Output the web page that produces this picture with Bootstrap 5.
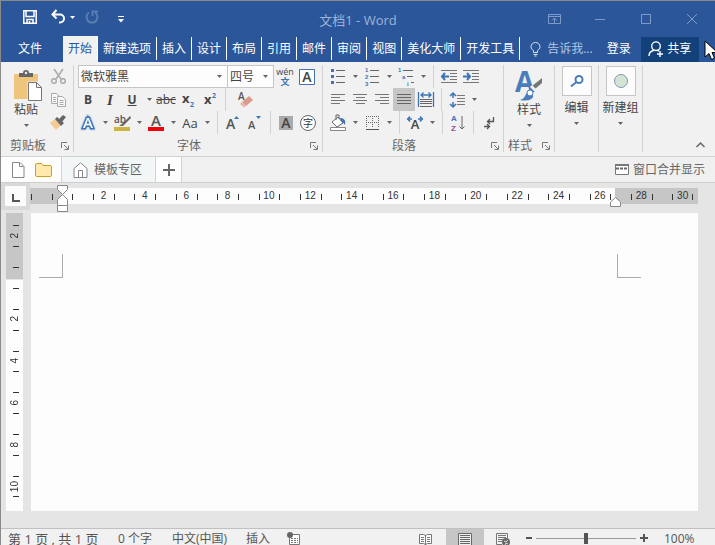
<!DOCTYPE html>
<html lang="zh-CN">
<head>
<meta charset="utf-8">
<meta name="viewport" content="width=device-width, initial-scale=1">
<title>文档1 - Word</title>
<link rel="stylesheet" href="https://cdn.jsdelivr.net/npm/bootstrap@5.3.0/dist/css/bootstrap.min.css">
<style>
:root{--blue:#2b579a;--line:#d2d2d2;--ink:#444;--dim:#666}
body{font:12px/16px "Open Sans","Noto Sans CJK SC",sans-serif;color:var(--ink);background:#e5e5e5}
button,select,input{font:inherit;color:inherit}
svg{display:block;flex:none;overflow:visible}
.plain{border:0;padding:0;background:none;display:flex;align-items:center;justify-content:center}
.app{border-top:1px solid #8a8a8a;border-left:1px solid #8a8a8a;overflow:hidden}
.titlebar{display:grid;grid-template-columns:1fr auto 1fr;height:35px;background:var(--blue);color:#9db4d6;align-items:center}
.doctitle{font-size:13px;padding-top:2px}
.quick{padding-left:22px;padding-bottom:3px}
.q-undo{margin-left:14px}.q-redo{margin-left:10px}.q-more{margin-left:19px}
.winbtn{width:46px;height:30px}
.tabs{background:var(--blue);height:26px;color:#fff}
.tabs a{color:#fff;text-decoration:none}
.tabs .file{width:62px;text-align:center;padding-right:4px}
.tabs li{height:26px;padding-top:1px}
.tabs li a{display:block;height:23px;line-height:23px;padding:0 5px;border-right:1px solid #fff}
.tabs li.on{background:#f1f1f1}
.tabs li.on a{color:var(--blue)}
.tell{color:#b3c6e2;margin-left:10px;gap:6px}
.login{margin-left:14px}
.share{background:#124078;width:58px;height:25px;margin-left:10px;color:#fff;gap:3px}
.pointer{position:absolute;left:703px;top:39px}
.ribbon{background:#f1f1f1;padding:3px 0 4px;border-bottom:1px solid var(--line)}
.grp{border-right:1px solid var(--line);height:87px}
.g-clip{width:73px}.g-font{width:249px}.g-para{width:181px}.g-style{width:51px}.g-one{width:44px}
.upper{height:69px}
.rowline{height:23px;padding-left:3px}
.g-para .rowline{padding-left:4px}
.tb{width:22px;height:23px}
.tb.on{background:#c6c6c6}
.tb.slim{width:14px}
.tb.ital{font-family:"Liberation Serif",serif;font-size:15px;font-weight:700;font-style:italic}
.tb.mid{font-size:13px}
.dd{width:12px;height:23px}
.rule{width:1px;height:23px;background:var(--line);margin:0 4px}
.tiny{font:700 6px "Liberation Sans",Arial,sans-serif;fill:#3d74b5}
.cap{height:15px;line-height:15px;margin-top:4px;color:var(--dim);position:relative;text-align:center;padding-right:18px}
.cap button{position:absolute;right:4px;top:4px}
.pick{appearance:none;border:1px solid #c6c6c6;border-radius:0;height:23px;padding:0 2px;background:#fdfdfd url("data:image/svg+xml,%3Csvg xmlns='http://www.w3.org/2000/svg' width='5' height='3'%3E%3Cpath d='M0 0h5L2.5 3z' fill='%23666'/%3E%3C/svg%3E") no-repeat right 5px center}
.pick.fam{width:150px;margin-left:1px}
.pick.size{width:47px;margin-left:-1px}
.big{flex-direction:column;justify-content:flex-start;width:100%}
.big span{line-height:18px;margin-bottom:5px}
.big.paste{width:50px}
.pic{margin-top:6px}
.tile{width:30px;height:30px;border:1px solid #c6c6c6;background:#fcfcfc;display:flex;align-items:center;justify-content:center;margin:1px 0 3px}
.fold{margin:0 10px 4px auto}
.docbar{height:26px;border-bottom:1px solid #cfcfcf;background:#f0f0f0;color:var(--dim)}
.docbar>*{height:25px}
.files{background:#fdfdfd;width:61px;border-right:1px solid var(--line);gap:10px;padding-left:10px}
.doctab{background:#f3f6f6;width:94px;border-right:1px solid var(--line);gap:6px;color:var(--dim);text-decoration:none;padding-right:2px}
.addtab{background:#fdfdfd;width:26px;border-right:1px solid var(--line)}
.merge{margin:0 10px 0 auto}
.work{display:grid;grid-template-columns:29px 1fr;grid-template-rows:27px 1fr;padding-bottom:17px;padding-right:17px}
.corner{background:#d9d9d9;padding:3px 0 0 4px}
.corner button{width:21px;height:20px;background:#fcfcfc;padding-top:4px}
.hruler{padding:5px 0 6px;position:relative}
.ticks{font:10px/16px "Liberation Sans",Arial,sans-serif;color:#333;text-align:center}
.hticks{height:16px;padding:0 5px 0 1px;background:linear-gradient(#c6c6c6,#c6c6c6) left/33px 100% no-repeat,linear-gradient(#c6c6c6,#c6c6c6) right/83px 100% no-repeat,#fdfdfd}
.hticks span,.vticks span{flex:1 1 0;min-width:0;min-height:0;position:relative;display:flex;align-items:center;justify-content:center}
.hticks span::before,.hticks span:last-child::after{content:"";position:absolute;left:0;top:6px;width:1px;height:6px;background:#333}
.hticks span:last-child::after{left:auto;right:0}
.vruler{padding:3px 6px 0 5px}
.vticks{width:17px;height:100%;padding:12px 0 14px;background:linear-gradient(#c6c6c6 66px,#e5e5e5 66px) top/100% 67px no-repeat,#fdfdfd}
.vticks span::before,.vticks span:last-child::after{content:"";position:absolute;top:0;left:7px;height:1px;width:6px;background:#333}
.vticks span:last-child::after{top:auto;bottom:0}
.vticks b{font-weight:400;writing-mode:vertical-rl;transform:rotate(180deg);line-height:12px}
.mk{position:absolute}
.mk-l{left:26px;top:2px}
.mk-r{right:77px;top:14px}
.sheet{background:#fdfdfd;margin:3px 0 0 1px;padding:41px 57px 0 8px;outline:0}
.crop{width:24px;height:24px;border:solid #ababab;border-width:0 1px 1px 0}
.crop.r{border-width:0 0 1px 1px}
.status{height:17px;border-top:1px solid #c0c0c0;background:#f1f1f1;color:#555;overflow:hidden}
.status>*{height:18px;line-height:20px;flex:none}
.pages{font-size:13px;margin-left:7px;width:110px}
.words{width:54px}.lang{width:74px}.mode{width:41px}
.view{width:38px;padding-top:2px}
.view.first{padding-right:3px}
.view.on{background:#c6c6c6}
.zoom{appearance:none;width:100px;margin:0 4px;background:linear-gradient(#999,#999) center/100% 1px no-repeat}
.zoom::-webkit-slider-thumb{appearance:none;width:4px;height:11px;background:#555}
.zoom::-moz-range-thumb{width:4px;height:11px;background:#555;border:0;border-radius:0}
.pct{width:51px;margin-left:16px}
</style>
<script src="https://cdn.jsdelivr.net/npm/bootstrap@5.3.0/dist/js/bootstrap.bundle.min.js"></script>
</head>
<body>
<svg width="0" height="0" class="position-absolute" aria-hidden="true">
<symbol id="caret" viewBox="0 0 5 3"><path d="M0 0h5L2.5 3z" fill="#666"/></symbol>
<symbol id="launch" viewBox="0 0 8 8"><path d="M.5 6V.5H6M3 3l4 4M7.500 3.500v4h-4" fill="none" stroke="#777"/></symbol>
</svg>
<div class="app d-flex flex-column vh-100 position-relative">
<header class="titlebar">
 <div class="quick d-flex align-items-center">
  <button class="plain" aria-label="保存"><svg width="14" height="14" fill="none" stroke="#fff" stroke-width="1.500"><path d="M.8.8h12.400v12.400H.8zM3 1v5.500h8V1M4 13V9.500h6V13M6.500 11v2"/></svg></button>
  <button class="plain q-undo" aria-label="撤消"><svg width="15" height="14" fill="none" stroke="#fff" stroke-width="2"><path d="M2 4.500h7a4 4 0 0 1 0 8H8M5.500 0L1.500 4.500l4 4"/></svg></button>
  <button class="plain ms-1" aria-label="撤消选项"><svg width="5" height="3"><path d="M0 0h5L2.500 3z" fill="#fff"/></svg></button>
  <button class="plain q-redo" aria-label="重复"><svg width="14" height="14" fill="none" stroke="#5a7db3" stroke-width="2"><path d="M4 2.500a5.500 5.500 0 1 0 6 0M7.500 6V1.500H13"/></svg></button>
  <button class="plain q-more pt-1" aria-label="自定义"><svg width="6" height="7"><path d="M0 .5h6" stroke="#fff"/><path d="M0 3h6L3 6.500z" fill="#fff"/></svg></button>
 </div>
 <div class="doctitle">文档1 - Word</div>
 <div class="d-flex justify-content-end">
  <button class="plain winbtn" aria-label="功能区显示选项"><svg width="13" height="10" fill="none" stroke="#7e9ac6"><path d="M.5.5h12v9H.5zM.5 2.500h12M6.500 9V4M4 6.500L6.500 4 9 6.500"/></svg></button>
  <button class="plain winbtn" aria-label="最小化"><svg width="10" height="10"><path d="M0 5.500h10" stroke="#7e9ac6"/></svg></button>
  <button class="plain winbtn" aria-label="最大化"><svg width="10" height="10" fill="none" stroke="#7e9ac6"><path d="M.5.5h9v9h-9z"/></svg></button>
  <button class="plain winbtn" aria-label="关闭"><svg width="10" height="10" stroke="#7e9ac6"><path d="M0 0l10 10M10 0L0 10"/></svg></button>
 </div>
</header>
<nav class="tabs d-flex align-items-center">
 <a class="file" href="#">文件</a>
 <ul class="list-unstyled d-flex m-0">
  <li class="on"><a href="#">开始</a></li><li><a href="#">新建选项</a></li><li><a href="#">插入</a></li><li><a href="#">设计</a></li><li><a href="#">布局</a></li><li><a href="#">引用</a></li><li><a href="#">邮件</a></li><li><a href="#">审阅</a></li><li><a href="#">视图</a></li><li><a href="#">美化大师</a></li><li><a href="#">开发工具</a></li>
 </ul>
 <button class="plain tell"><svg width="11" height="14" fill="none" stroke="#dbe4f2"><path d="M3.500 10.500v-2C2 7.500 1 6.500 1 4.800a4.500 4.300 0 0 1 9 0c0 1.700-1 2.700-2.500 3.700v2zM3.500 12.500h4M4.500 14h2"/></svg>告诉我...</button>
 <a class="login" href="#">登录</a>
 <button class="plain share"><svg width="16" height="16" fill="none" stroke="#fff" stroke-width="1.400"><circle cx="8" cy="5.200" r="4.300"/><path d="M1 15c0-3 2-5 5-5.700M9.500 9.300l1.500.7M9 13h6M12 10v6"/></svg>共享</button>
</nav>
<svg class="pointer" width="12" height="22"><path d="M1 1v16l4-3.500 2.500 6 3-1.300L8 12.500h5.500z" fill="#fff" stroke="#000"/></svg>

<main class="ribbon d-flex">
 <section class="grp g-clip">
  <div class="upper d-flex">
   <button class="plain big paste">
    <svg width="28" height="30" class="pic ms-1"><path d="M0 3h24v25H0z" fill="#edc57d"/><path d="M5 6V2h4a3 3 0 0 1 6 0h4v4z" fill="#666"/><circle cx="12" cy="2" r="1.200" fill="#f1f1f1"/><path d="M13.500 10.500h15v19h-15z" fill="#f1f1f1"/><path d="M14.500 11.500h8l5 5v13h-13zM22.500 11.500v5h5" fill="#fff" stroke="#777"/></svg>
    <span>粘贴</span><svg width="5" height="3"><use href="#caret"/></svg></button>
   <div class="d-flex flex-column">
    <button class="plain tb slim" aria-label="剪切"><svg width="15" height="15" fill="none" stroke="#aaa" stroke-width="1.500"><path d="M3 0l7 10M12 0L5 10"/><circle cx="3" cy="12" r="2.300"/><circle cx="12" cy="12" r="2.300"/></svg></button>
    <button class="plain tb slim" aria-label="复制"><svg width="15" height="14" fill="#f7f7f7" stroke="#aaa"><path d="M.5.5h5l3 3v7h-8z"/><path d="M6.500 3.500h5l3 3v7h-8z"/><path d="M2 4.500h3M2 6.500h3M2 8.500h3M8.500 7.500h4M8.500 9.500h4M8.500 11.500h4"/></svg></button>
    <button class="plain tb slim" aria-label="格式刷"><svg width="16" height="15"><path d="M0 8l5-4 6 6-5 5z" fill="#f5cb93"/><path d="M5 4l2-2 7 6-3 3z" fill="#666"/><path d="M9 4l4-4 3 2-4 5z" fill="#666"/></svg></button>
   </div>
  </div>
  <div class="cap">剪贴板<button class="plain" aria-label="剪贴板选项"><svg width="8" height="8"><use href="#launch"/></svg></button></div>
 </section>

 <section class="grp g-font">
  <div class="rowline d-flex">
   <select class="pick fam" aria-label="字体"><option>微软雅黑</option></select>
   <select class="pick size" aria-label="字号"><option>四号</option></select>
   <button class="plain tb" aria-label="拼音指南"><svg width="16" height="18"><text x="8" y="7" text-anchor="middle" font-size="9" fill="#444">wén</text><text x="8" y="17" text-anchor="middle" font-size="9" font-weight="700" fill="#3d74b5">文</text></svg></button>
   <button class="plain tb" aria-label="字符边框"><svg width="16" height="16"><path d="M.5.5h15v15H.5z" fill="#fff" stroke="#4472b0"/><text x="8" y="13" text-anchor="middle" font-size="14" font-weight="600" fill="#444">A</text></svg></button>
  </div>
  <div class="rowline d-flex">
   <button class="plain tb fw-bold">B</button>
   <button class="plain tb ital">I</button>
   <button class="plain tb text-decoration-underline fw-bold">U</button>
   <button class="plain dd" aria-label="下划线"><svg width="5" height="3"><use href="#caret"/></svg></button>
   <button class="plain tb text-decoration-line-through">abc</button>
   <button class="plain tb" aria-label="下标"><svg width="14" height="14"><text x="1" y="10" font-size="13" font-weight="700" fill="#444">x</text><text x="9" y="14" font-size="7" font-weight="700" fill="#3d74b5">2</text></svg></button>
   <button class="plain tb" aria-label="上标"><svg width="14" height="14"><text x="1" y="11" font-size="13" font-weight="700" fill="#444">x</text><text x="9" y="5" font-size="7" font-weight="700" fill="#3d74b5">2</text></svg></button>
   <i class="rule"></i>
   <button class="plain tb ms-1" aria-label="清除格式"><svg width="15" height="15"><path d="M4 10l7-6 4 4-7 6z" fill="#dd9a8b"/><path d="M2 12l2-2 4 4-2 1.500z" fill="#e7b5aa"/><text x="0" y="8" font-size="10" font-weight="600" fill="#555">A</text></svg></button>
  </div>
  <div class="rowline d-flex">
   <button class="plain tb" aria-label="文本效果"><svg width="16" height="16"><text x="8" y="13" text-anchor="middle" font-size="15" font-weight="600" fill="#fff" stroke="#3d74b5" style="paint-order:stroke;filter:drop-shadow(0 0 1px #8fb4e3)" stroke-width="3">A</text></svg></button>
   <button class="plain dd" aria-label="文本效果选项"><svg width="5" height="3"><use href="#caret"/></svg></button>
   <button class="plain tb" aria-label="突出显示"><svg width="16" height="16"><path d="M0 12h16v4H0z" fill="#cdb53a"/><text x="0" y="8" font-size="10" font-weight="600" fill="#555">ab</text><path d="M16 1L9 8l-4 3h4l8-8z" fill="#666"/></svg></button>
   <button class="plain dd" aria-label="突出显示选项"><svg width="5" height="3"><use href="#caret"/></svg></button>
   <button class="plain tb" aria-label="字体颜色"><svg width="16" height="16"><text x="8" y="11" text-anchor="middle" font-size="15" font-weight="600" fill="#555">A</text><path d="M0 12h16v4H0z" fill="#f0000c"/></svg></button>
   <button class="plain dd" aria-label="字体颜色选项"><svg width="5" height="3"><use href="#caret"/></svg></button>
   <button class="plain tb mid">Aa</button>
   <button class="plain dd" aria-label="更改大小写"><svg width="5" height="3"><use href="#caret"/></svg></button>
   <i class="rule"></i>
   <button class="plain tb" aria-label="增大字号"><svg width="14" height="14"><text x="0" y="13" font-size="14" font-weight="600" fill="#555">A</text><path d="M8 3h5L10.500 0z" fill="#3d74b5"/></svg></button>
   <button class="plain tb" aria-label="减小字号"><svg width="14" height="14"><text x="0" y="13" font-size="11" font-weight="600" fill="#555">A</text><path d="M8 0h5L10.500 3z" fill="#3d74b5"/></svg></button>
   <i class="rule"></i>
   <button class="plain tb" aria-label="字符底纹"><svg width="14" height="14"><path d="M0 0h14v14H0z" fill="#aaa"/><text x="7" y="12" text-anchor="middle" font-size="14" font-weight="600" fill="#444">A</text></svg></button>
   <button class="plain tb" aria-label="带圈字符"><svg width="16" height="16"><circle cx="8" cy="8" r="7.500" fill="#fff" stroke="#666"/><text x="8" y="12" text-anchor="middle" font-size="10" fill="#333">字</text></svg></button>
  </div>
  <div class="cap">字体<button class="plain" aria-label="字体选项"><svg width="8" height="8"><use href="#launch"/></svg></button></div>
 </section>

 <section class="grp g-para">
  <div class="rowline d-flex">
   <button class="plain tb" aria-label="项目符号"><svg width="14" height="15"><path d="M0 0h3v3H0zM0 6h3v3H0zM0 12h3v3H0z" fill="#3d74b5"/><path d="M5 1.500h9M5 7.500h9M5 13.500h9" stroke="#666"/></svg></button>
   <button class="plain dd" aria-label="项目符号选项"><svg width="5" height="3"><use href="#caret"/></svg></button>
   <button class="plain tb" aria-label="编号"><svg width="14" height="15"><g class="tiny"><text x="0" y="3">1</text><text x="0" y="10">2</text><text x="0" y="17">3</text></g><path d="M5 1.500h9M5 7.500h9M5 13.500h9" stroke="#666"/></svg></button>
   <button class="plain dd" aria-label="编号选项"><svg width="5" height="3"><use href="#caret"/></svg></button>
   <button class="plain tb" aria-label="多级列表"><svg width="16" height="15"><g class="tiny"><text x="0" y="3">1</text><text x="4" y="10">a</text><text x="9" y="17">i</text></g><path d="M5 1.500h10M9 7.500h6M13 13.500h3" stroke="#666"/></svg></button>
   <button class="plain dd" aria-label="多级列表选项"><svg width="5" height="3"><use href="#caret"/></svg></button>
   <i class="rule"></i>
   <button class="plain tb" aria-label="减少缩进"><svg width="16" height="14"><path d="M0 .5h16M9 3.500h7M9 6.500h7M9 9.500h7M0 12.500h16" stroke="#777"/><path d="M8 6.500H1M4 3L1 6.500 4 10" fill="none" stroke="#3d74b5" stroke-width="2"/></svg></button>
   <button class="plain tb" aria-label="增加缩进"><svg width="16" height="14"><path d="M0 .5h16M9 3.500h7M9 6.500h7M9 9.500h7M0 12.500h16" stroke="#777"/><path d="M0 6.500h7M4 3l3 3.500L4 10" fill="none" stroke="#3d74b5" stroke-width="2"/></svg></button>
  </div>
  <div class="rowline d-flex">
   <button class="plain tb" aria-label="左对齐"><svg width="14" height="11"><path d="M0 .5h14M0 3.500h9M0 6.500h14M0 9.500h9" stroke="#777"/></svg></button>
   <button class="plain tb" aria-label="居中"><svg width="14" height="11"><path d="M0 .5h14M3 3.500h9M0 6.500h14M3 9.500h9" stroke="#777"/></svg></button>
   <button class="plain tb" aria-label="右对齐"><svg width="14" height="11"><path d="M0 .5h14M5 3.500h9M0 6.500h14M5 9.500h9" stroke="#777"/></svg></button>
   <button class="plain tb on" aria-label="两端对齐"><svg width="14" height="11"><path d="M0 .5h14M0 3.500h14M0 6.500h14M0 9.500h14" stroke="#666"/></svg></button>
   <button class="plain tb" aria-label="分散对齐"><svg width="16" height="15"><path d="M.5 0v15M15.500 0v15M3 3h10M5.500.5L3 3l2.500 2.500M10.500.5L13 3l-2.500 2.500" fill="none" stroke="#3d74b5" stroke-width="1.300"/><path d="M2 7.500h12M2 9.500h12M2 11.500h12M2 14.500h12" stroke="#666"/></svg></button>
   <i class="rule"></i>
   <button class="plain tb" aria-label="行距"><svg width="15" height="16"><path d="M3 1v5M3 10v5M0 4l3-3 3 3M0 12l3 3 3-3" fill="none" stroke="#3d74b5" stroke-width="1.500"/><path d="M7 3.500h8M7 6.500h8M7 9.500h8M7 12.500h8" stroke="#777"/></svg></button>
   <button class="plain dd" aria-label="行距选项"><svg width="5" height="3"><use href="#caret"/></svg></button>
  </div>
  <div class="rowline d-flex">
   <button class="plain tb" aria-label="底纹"><svg width="16" height="17"><path d="M2 8l6-5 5 6-6 4z" fill="#fff" stroke="#666"/><path d="M6 6V1h3v4" fill="none" stroke="#666"/><path d="M10 4c4 0 6 2 5 7-1-1-2-3-4-4z" fill="#3d74b5"/><path d="M.5 13.500h15v3H.5z" fill="#fff" stroke="#888"/></svg></button>
   <button class="plain dd" aria-label="底纹选项"><svg width="5" height="3"><use href="#caret"/></svg></button>
   <button class="plain tb" aria-label="边框"><svg width="13" height="14"><path d="M0 .5h13M0 6.500h13M.5 0v12M6.500 0v12M12.500 0v12" stroke="#666" stroke-dasharray="1 1"/><path d="M0 13.500h13" stroke="#555"/></svg></button>
   <button class="plain dd" aria-label="边框选项"><svg width="5" height="3"><use href="#caret"/></svg></button>
   <i class="rule"></i>
   <button class="plain tb" aria-label="中文版式"><svg width="16" height="13"><text x="8" y="13" text-anchor="middle" font-size="13" font-weight="600" fill="#444">A</text><path d="M0 3h5M3 .5L.7 3 3 5.500M16 3h-5M13 .5L15.300 3 13 5.500" fill="none" stroke="#3d74b5" stroke-width="1.500"/></svg></button>
   <button class="plain dd" aria-label="中文版式选项"><svg width="5" height="3"><use href="#caret"/></svg></button>
   <i class="rule"></i>
   <button class="plain tb" aria-label="排序"><svg width="14" height="16" font-family="Liberation Sans" font-size="8" font-weight="700"><text x="0" y="6" fill="#3d74b5">A</text><text x="0" y="16" fill="#964f9b">Z</text><path d="M11 1v13M8.500 11.500L11 14l2.500-2.500" fill="none" stroke="#666"/></svg></button>
   <i class="rule"></i>
   <button class="plain tb" aria-label="显示编辑标记"><svg width="11" height="12" fill="none" stroke="#555" stroke-width="1.300"><path d="M9.500 0v4.500H4M6 2L3.500 4.500 6 7M0 9.500h5M3 7l2.500 2.500L3 12"/></svg></button>
  </div>
  <div class="cap">段落<button class="plain" aria-label="段落选项"><svg width="8" height="8"><use href="#launch"/></svg></button></div>
 </section>

 <section class="grp g-style">
  <div class="upper"><button class="plain big"><svg width="28" height="30" class="pic"><text x="0" y="21" font-size="28" font-weight="700" fill="#4a7ebb">A</text><path d="M27 7v5l-7 6-3-3z" fill="#777"/><path d="M17 14l4 4-2 2-4-4z" fill="#f1f1f1"/><path d="M5 29c4-1 5-4 6-6 3-3 8-1 7 3-2 4-9 4-13 3z" fill="#4a7ebb"/><circle cx="15" cy="22" r="3" fill="#fff" stroke="#4a7ebb"/></svg><span>样式</span><svg width="5" height="3"><use href="#caret"/></svg></button></div>
  <div class="cap">样式<button class="plain" aria-label="样式选项"><svg width="8" height="8"><use href="#launch"/></svg></button></div>
 </section>
 <section class="grp g-one"><button class="plain big"><i class="tile"><svg width="14" height="12" fill="none" stroke="#4a7ebb" stroke-width="2"><circle cx="9" cy="4.500" r="3.500"/><path d="M6.500 7L1 11.500"/></svg></i><span>编辑</span><svg width="5" height="3"><use href="#caret"/></svg></button></section>
 <section class="grp g-one"><button class="plain big"><i class="tile"><svg width="14" height="14"><circle cx="7" cy="7" r="6.500" fill="#d3e4d6" stroke="#8096b4"/></svg></i><span>新建组</span><svg width="5" height="3"><use href="#caret"/></svg></button></section>
 <button class="plain fold align-self-end" aria-label="折叠功能区"><svg width="9" height="6"><path d="M.5 5l4-4 4 4" fill="none" stroke="#666" stroke-width="1.500"/></svg></button>
</main>

<nav class="docbar d-flex">
 <div class="files d-flex align-items-center">
  <button class="plain" aria-label="新建"><svg width="14" height="16"><path d="M1.500.5H9l4 4v11H1.500zM8.500.5v4h4" fill="#fff" stroke="#888"/></svg></button>
  <button class="plain" aria-label="打开"><svg width="17" height="14"><path d="M2 .5h4.500l1.500 2h7q1.500 0 1.500 1.500v8q0 1.500-1.500 1.500H2Q.5 13.500.5 12V2Q.5.500 2 .5z" fill="#ffe9ad" stroke="#c9a227"/></svg></button>
 </div>
 <a href="#" class="doctab d-flex align-items-center justify-content-center"><svg width="15" height="16"><path d="M1 15.500v-9L7.500.8 14 6.500v9zM5.500 15V8.500h4V15" fill="#fff" stroke="#888"/></svg>模板专区</a>
 <button class="plain addtab" aria-label="新标签"><svg width="12" height="12"><path d="M6 0v12M0 6h12" stroke="#666" stroke-width="2"/></svg></button>
 <button class="plain merge gap-1"><svg width="14" height="11"><path d="M.5.5h13v10H.5z" fill="#fff" stroke="#777"/><path d="M0 1h14" stroke="#777" stroke-width="2"/><path d="M1 4.500h12" stroke="#666" stroke-width="2" stroke-dasharray="3 1"/></svg>窗口合并显示</button>
</nav>

<div class="work flex-fill">
 <div class="corner"><button class="plain" aria-label="制表符"><svg width="8" height="8"><path d="M1 0v7h7" fill="none" stroke="#555" stroke-width="2"/></svg></button></div>
 <div class="hruler">
  <div class="ticks hticks d-flex" id="hr"></div>
  <svg class="mk mk-l" width="12" height="28" fill="#fff" stroke="#888"><path d="M1.500.5h10v4l-5 5-5-5z"/><path d="M6.500 9.500l5 5v6h-10v-6z"/><path d="M1.500 20.500h10v6h-10z"/></svg>
  <svg class="mk mk-r" width="11" height="10" fill="#fff" stroke="#888"><path d="M5.500.5l5 4.500v4.500H.5V5z"/></svg>
 </div>
 <div class="vruler"><div class="ticks vticks d-flex flex-column" id="vt"></div></div>
 <div class="sheet d-flex justify-content-between" contenteditable="true" role="textbox" aria-label="文档"><span class="crop"></span><span class="crop r"></span></div>
</div>

<footer class="status d-flex">
 <div class="pages">第 1 页 , 共 1 页</div><div class="words">0 个字</div><div class="lang">中文(中国)</div><div class="mode">插入</div>
 <button class="plain" aria-label="宏"><svg width="13" height="13"><path d="M2.500 2.500h10v10h-10z" fill="#fff" stroke="#777"/><path d="M4 6.500h7M4 8.500h7M4 10.500h7" stroke="#777" stroke-dasharray="2 1"/><circle cx="3" cy="3" r="3" fill="#666"/></svg></button>
 <button class="plain view first ms-auto" aria-label="阅读视图"><svg width="13" height="12" fill="#fff" stroke="#777"><path d="M.5 1.500h4l2 1 2-1h4v9h-4l-2 1-2-1h-4zM6.500 2v10M2 4.500h3M2 6.500h3M2 8.500h3M8 4.500h3M8 6.500h3M8 8.500h3"/></svg></button>
 <button class="plain view on" aria-label="页面视图"><svg width="14" height="13"><path d="M.5.5h13v12H.5z" fill="#eee" stroke="#666"/><path d="M2 2.500h10M2 4.500h10M2 6.500h10M2 8.500h10M2 10.500h10" stroke="#666"/></svg></button>
 <button class="plain view" aria-label="Web 视图"><svg width="14" height="13"><path d="M11.500 5V.5H.5v11H6M2 2.500h8M2 4.500h8M2 6.500h5M2 8.500h4" fill="none" stroke="#777"/><circle cx="10" cy="9" r="4" fill="#666"/><path d="M8 8l2 1 2-2M9 12l1-2 2 1" fill="none" stroke="#ddd"/></svg></button>
 <button class="plain ms-1" aria-label="缩小"><svg width="6" height="2"><path d="M0 1h6" stroke="#555" stroke-width="2"/></svg></button>
 <input class="zoom" type="range" min="0" max="100" value="50" aria-label="缩放">
 <button class="plain" aria-label="放大"><svg width="8" height="8"><path d="M4 0v8M0 4h8" stroke="#555" stroke-width="2"/></svg></button>
 <div class="pct">100%</div>
</footer>
</div>
<script>
// Each ruler cell spans one unit and starts with a tick; even units carry a number.
function ruler(id, from, to, tag) {
  let out = '';
  for (let n = from; n <= to; n++) {
    const label = n !== 0 && n % 2 === 0 ? Math.abs(n) : '';
    out += `<span><${tag}>${label}</${tag}></span>`;
  }
  document.getElementById(id).innerHTML = out;
}
ruler('hr', -1, 30, 'div');
ruler('vt', -2, 10, 'b');
</script>
</body>
</html>
